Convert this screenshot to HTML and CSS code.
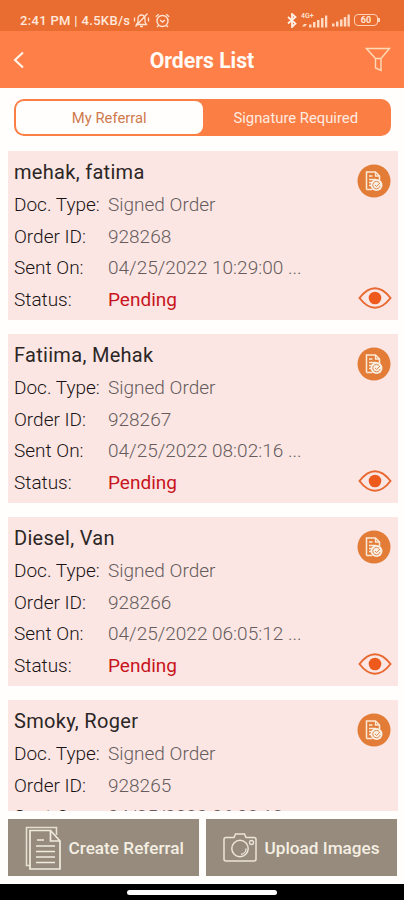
FILE: index.html
```
<!DOCTYPE html>
<html lang="en">
<head>
    <meta charset="UTF-8">
    <meta name="viewport" content="width=device-width, initial-scale=1.0">
    <title>Orders List</title>
    <link rel="stylesheet" href="styles.css">
</head>
<body>
    <!-- Shared icons -->
    <svg class="sprite" aria-hidden="true">
        <symbol id="icon-doc" viewBox="0 0 34 34">
            <circle cx="17" cy="17" r="16.5" fill="#e37c37"/>
            <path d="M9.5 25.500V8h9l4 4v4M9.500 25.500H15" fill="none" stroke="#fbe9d8" stroke-width="1.500"/>
            <path d="M18.500 8v4h4M12 12h3.500M12 15.500h7M12 18.500h3M12 21.500h2" fill="none" stroke="#fbe9d8" stroke-width="1.300"/>
            <circle cx="19.500" cy="21" r="6" fill="#fbeee2"/>
            <path d="M22.300 18.700a3.700 3.700 0 1 0 .8 3.300M18 21l1.600 1.500 3.400-3.500" fill="none" stroke="#dc8b50" stroke-width="1"/>
        </symbol>
        <symbol id="icon-eye" viewBox="0 0 34 22">
            <path d="M1.500 11Q9 1.200 17 1.200T32.500 11Q25 20.800 17 20.800T1.500 11Z" fill="none" stroke="#e9682f" stroke-width="2"/>
            <circle cx="17" cy="11" r="6.300" fill="#ee5a1c"/>
        </symbol>
    </svg>

    <div class="status-bar">
        <span class="status-text">2:41 PM | 4.5KB/s</span>
        <svg class="status-mute" width="17" height="16" viewBox="0 0 17 16">
            <path d="M3.500 12.500h10l-1.500-2.500V6.500a3.500 3.500 0 0 0-7 0V10zM7 14.500h3M14.500 1.500l-12 13M1.500 5.500v4M15.500 5.500v4" fill="none" stroke="#ffe3d2" stroke-width="1.300"/>
        </svg>
        <svg class="status-alarm" width="15" height="15" viewBox="0 0 15 15">
            <circle cx="7.500" cy="8" r="5.500" fill="none" stroke="#ffe3d2" stroke-width="1.400"/>
            <path d="M.8 3.800l3-2.600M14.200 3.800l-3-2.600M5 7l2.500 2L10 7M3.500 12.500L2 14M11.500 12.500L13 14" fill="none" stroke="#ffe3d2" stroke-width="1.400"/>
        </svg>
        <div class="status-right">
            <svg width="10" height="15" viewBox="0 0 10 15">
                <path d="M1 4l7.500 6.500L5 14V1l3.500 3L1 10.500" fill="none" stroke="#fff0e6" stroke-width="1.800"/>
            </svg>
            <div class="network">
                <span class="network-type">4G+</span>
                <svg width="27" height="14" viewBox="0 0 27 14">
                    <path d="M1 12.500l2-2.500h3l-2 2.500zM8 13.500v-3h2.500v3zM12 13.500V8h2.500v5.500zM16 13.500V6h2.500v7.500zM20 13.500V4h2.500v9.500zM24 13.500V1.500h2.300v12z" fill="#ffd9c2"/>
                </svg>
            </div>
            <svg width="18" height="14" viewBox="0 0 18 14">
                <path d="M0 13.500v-3h2.500v3zM4 13.500V8.500h2.500v5zM8 13.500V6.500h2.500v7zM11.800 13.500V4h2.500v9.500zM15.500 13.500V1.500h2.300v12z" fill="#ffd9c2"/>
            </svg>
            <div class="battery">60</div>
        </div>
    </div>

    <div class="header">
        <svg class="back" width="12" height="18" viewBox="0 0 12 18">
            <path d="M10 1.500L2 9l8 7.500" fill="none" stroke="#fff3e8" stroke-width="2.200"/>
        </svg>
        <h1 class="title">Orders List</h1>
        <svg class="filter" width="26" height="25" viewBox="0 0 26 25">
            <path d="M1.500 1.500h23L16 11.500v12L10.500 21v-9.500zM10.500 11.500H16" fill="none" stroke="#ffd9b8" stroke-width="1.400"/>
        </svg>
    </div>

    <div class="tabs">
        <div class="tab active">My Referral</div>
        <div class="tab">Signature Required</div>
    </div>

    <div class="orders">
        <div class="card">
            <div class="name">mehak, fatima</div>
            <div class="row"><span class="label">Doc. Type:</span><span class="value">Signed Order</span></div>
            <div class="row"><span class="label">Order ID:</span><span class="value">928268</span></div>
            <div class="row"><span class="label">Sent On:</span><span class="value">04/25/2022 10:29:00 ...</span></div>
            <div class="row"><span class="label">Status:</span><span class="value pending">Pending</span></div>
            <svg class="doc-icon"><use href="#icon-doc"/></svg>
            <svg class="eye-icon"><use href="#icon-eye"/></svg>
        </div>
        <div class="card">
            <div class="name">Fatiima, Mehak</div>
            <div class="row"><span class="label">Doc. Type:</span><span class="value">Signed Order</span></div>
            <div class="row"><span class="label">Order ID:</span><span class="value">928267</span></div>
            <div class="row"><span class="label">Sent On:</span><span class="value">04/25/2022 08:02:16 ...</span></div>
            <div class="row"><span class="label">Status:</span><span class="value pending">Pending</span></div>
            <svg class="doc-icon"><use href="#icon-doc"/></svg>
            <svg class="eye-icon"><use href="#icon-eye"/></svg>
        </div>
        <div class="card">
            <div class="name">Diesel, Van</div>
            <div class="row"><span class="label">Doc. Type:</span><span class="value">Signed Order</span></div>
            <div class="row"><span class="label">Order ID:</span><span class="value">928266</span></div>
            <div class="row"><span class="label">Sent On:</span><span class="value">04/25/2022 06:05:12 ...</span></div>
            <div class="row"><span class="label">Status:</span><span class="value pending">Pending</span></div>
            <svg class="doc-icon"><use href="#icon-doc"/></svg>
            <svg class="eye-icon"><use href="#icon-eye"/></svg>
        </div>
        <div class="card">
            <div class="name">Smoky, Roger</div>
            <div class="row"><span class="label">Doc. Type:</span><span class="value">Signed Order</span></div>
            <div class="row"><span class="label">Order ID:</span><span class="value">928265</span></div>
            <div class="row"><span class="label">Sent On:</span><span class="value">04/25/2022 06:02:12</span></div>
            <svg class="doc-icon"><use href="#icon-doc"/></svg>
        </div>
    </div>

    <div class="actions">
        <button class="action">
            <svg width="36" height="44" viewBox="0 0 36 44">
                <path d="M5 39.500H1.500V1.500h30V9" fill="none" stroke="#e6dfd2" stroke-width="1.600"/>
                <path d="M25.500 4.500H5V43h30V15z" fill="none" stroke="#f1ebdf" stroke-width="1.700"/>
                <path d="M25.500 4.500V15H35M12 14h7M11 20h19M11 25.500h19M11 31h19M11 36.500h19" fill="none" stroke="#f1ebdf" stroke-width="1.700"/>
            </svg>
            <span>Create Referral</span>
        </button>
        <button class="action">
            <svg width="34" height="29" viewBox="0 0 34 29">
                <path d="M11 4.500l1.500-3.500h9L23 4.500h8q2 0 2 2V26q0 2-2 2H3q-2 0-2-2V6.500q0-2 2-2z" fill="none" stroke="#ece5d8" stroke-width="1.500"/>
                <circle cx="17" cy="15.500" r="8.200" fill="none" stroke="#ece5d8" stroke-width="1.500"/>
                <path d="M23 15.500a6 6 0 0 1-5 6" fill="none" stroke="#ece5d8" stroke-width="1.300"/>
                <circle cx="28.500" cy="9.500" r="2" fill="none" stroke="#ece5d8" stroke-width="1.300"/>
            </svg>
            <span>Upload Images</span>
        </button>
    </div>

    <div class="nav-bar"><div class="home"></div></div>
</body>
</html>
```
FILE: styles.css
```
body {
    font-family: Roboto, "Liberation Sans", sans-serif;
    margin: 0;
    height: 900px;
    display: flex;
    flex-direction: column;
    background: #fffefd;
    overflow: hidden;
}
.sprite {
    position: absolute;
    width: 0;
    height: 0;
}
svg {
    flex-shrink: 0;
}
.status-bar {
    height: 31px;
    flex-shrink: 0;
    box-sizing: border-box;
    padding: 9px 24px 0 20px;
    display: flex;
    align-items: center;
    background: #e96c30;
    color: #ffe9dc;
}
.status-text {
    font-size: 13px;
    font-weight: 500;
    letter-spacing: 0.33px;
    white-space: nowrap;
}
.status-mute {
    margin-left: 3px;
}
.status-alarm {
    margin-left: 5px;
}
.status-right {
    margin-left: auto;
    display: flex;
    align-items: center;
    gap: 4px;
}
.network {
    position: relative;
    height: 14px;
}
.network-type {
    position: absolute;
    left: 0;
    top: -1px;
    font-size: 7px;
    line-height: 8px;
    font-weight: 500;
}
.battery {
    width: 22px;
    height: 10px;
    margin-right: 2px;
    border: 1px solid #ffd0b4;
    border-radius: 4px;
    font-size: 9px;
    line-height: 10px;
    font-weight: 700;
    text-align: center;
    position: relative;
}
.battery::after {
    content: "";
    position: absolute;
    right: -3px;
    top: 3px;
    width: 2px;
    height: 4px;
    background: #ffd0b4;
}
.header {
    height: 57px;
    flex-shrink: 0;
    box-sizing: border-box;
    padding: 0 13px;
    display: flex;
    align-items: center;
    justify-content: space-between;
    background: #fe8048;
}
.back {
    margin-right: 14px;
}
.title {
    margin: 0;
    padding-top: 2px;
    font-size: 21.2px;
    font-weight: 700;
    color: #fffaf5;
}
.tabs {
    height: 37px;
    flex-shrink: 0;
    box-sizing: border-box;
    margin: 11px 13px 15px 14px;
    padding: 2px;
    display: flex;
    background: #fb7e45;
    border-radius: 10px;
}
.tab {
    flex: 1;
    display: flex;
    align-items: center;
    justify-content: center;
    padding-top: 1px;
    font-size: 14.8px;
    color: #ffece0;
    border-radius: 8px;
}
.tab.active {
    background: #fffefd;
    color: #cf7a4d;
}
.orders {
    flex: 1;
    overflow: hidden;
    padding: 0 6px 0 8px;
}
.card {
    position: relative;
    height: 169px;
    box-sizing: border-box;
    margin-bottom: 14px;
    padding: 5px 6px 0;
    background: #fbe6e4;
    font-size: 19px;
    line-height: 31.6px;
    font-weight: 300;
    color: #1a1414;
}
.name {
    margin-bottom: 1px;
    font-size: 20px;
    line-height: 32px;
    font-weight: 400;
    letter-spacing: 0.3px;
    color: #2c2626;
}
.row {
    display: flex;
    white-space: nowrap;
}
.label {
    width: 94px;
}
.value {
    color: #665c5c;
}
.value.pending {
    font-weight: 400;
    color: #c8141c;
}
.doc-icon {
    position: absolute;
    right: 7px;
    top: 13px;
    width: 34px;
    height: 34px;
}
.eye-icon {
    position: absolute;
    right: 6px;
    bottom: 11px;
    width: 34px;
    height: 22px;
}
.actions {
    height: 73px;
    flex-shrink: 0;
    box-sizing: border-box;
    padding: 8px 7px 8px 8px;
    display: flex;
    gap: 7px;
}
.action {
    flex: 1;
    display: flex;
    align-items: center;
    gap: 7.5px;
    padding: 0 0 0 17px;
    border: none;
    background: #968b7d;
    color: #f5efe3;
    font-family: inherit;
    font-size: 17.2px;
    font-weight: 500;
    white-space: nowrap;
}
.nav-bar {
    height: 16px;
    flex-shrink: 0;
    display: flex;
    align-items: center;
    justify-content: center;
    background: #000;
}
.home {
    width: 150px;
    height: 5px;
    border-radius: 3px;
    background: #fff;
}
```
